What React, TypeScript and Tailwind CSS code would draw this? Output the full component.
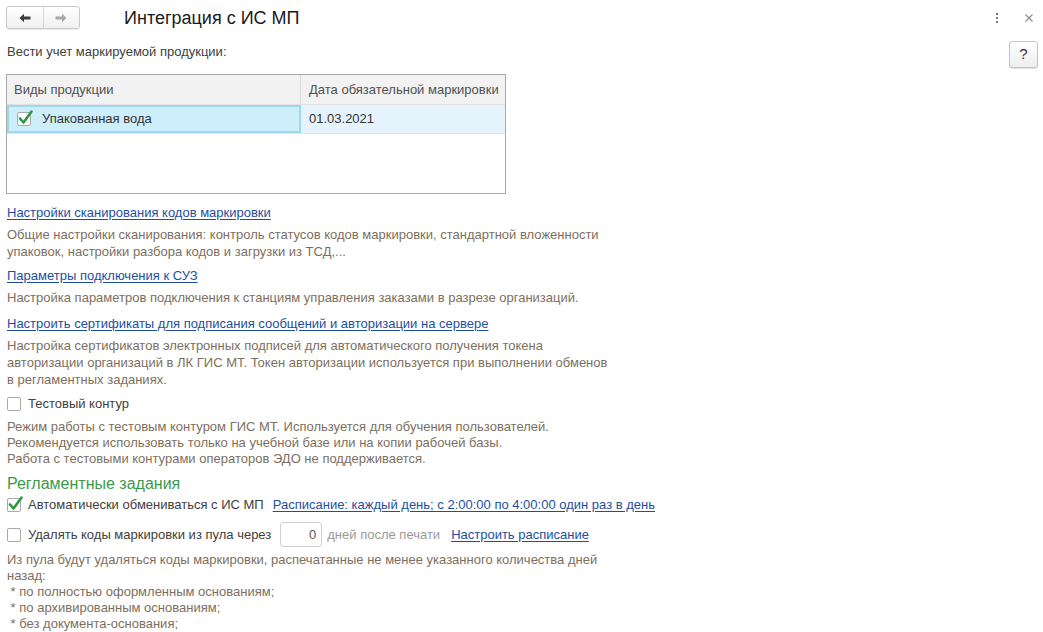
import React from "react";

const desc = "text-[13px] leading-[17px] text-[#7d6f60]";
const desc16 = "text-[13px] leading-[16px] text-[#7d6f60]";
const link = "text-[13px] leading-[17px] text-[#1d4f9f] underline underline-offset-2";

function CheckBox({ checked }: { checked?: boolean }) {
  return (
    <span className="relative inline-flex w-[14px] h-[14px] shrink-0 border border-[#a9a9a9] rounded-[2px] bg-white">
      {checked && (
        <svg className="absolute -left-[1px] -top-[4px]" width="17" height="17" viewBox="0 0 17 17">
          <path d="M3 9.5 L6.5 13.5 L14.5 2.5" fill="none" stroke="#2a9a45" strokeWidth="2.6" strokeLinecap="round" strokeLinejoin="round" />
        </svg>
      )}
    </span>
  );
}

export default function App() {
  return (
    <div className="w-[1043px] h-[632px] overflow-hidden bg-white text-[#404040] font-['Liberation_Sans',Arial,sans-serif] text-[13px] whitespace-nowrap">
      {/* header */}
      <div className="flex items-center h-[34px] pt-[1px]">
        <div className="ml-[6px] flex h-[23px] w-[74px] border border-[#c8c8c8] rounded-[3px] bg-gradient-to-b from-white to-[#f0f0f0] shadow-[0_1px_1px_rgba(0,0,0,0.08)]">
          <div className="flex-1 flex items-center justify-center border-r border-[#d6d6d6]">
            <svg width="12" height="10" viewBox="0 0 12 10">
              <path d="M0.5 5 L5 0.8 L5 3.6 L11.5 3.6 L11.5 6.4 L5 6.4 L5 9.2 Z" fill="#3c3c3c" />
            </svg>
          </div>
          <div className="flex-1 flex items-center justify-center">
            <svg width="12" height="10" viewBox="0 0 12 10">
              <path d="M11.5 5 L7 0.8 L7 3.6 L0.5 3.6 L0.5 6.4 L7 6.4 L7 9.2 Z" fill="#a8a8a8" />
            </svg>
          </div>
        </div>
        <div className="ml-[44px] text-[18px] text-[#1a1a1a] leading-none">Интеграция с ИС МП</div>
        <div className="ml-auto flex items-center">
          <div className="flex flex-col gap-[2px] mr-[27px]">
            <span className="w-[2px] h-[2px] bg-[#777]" />
            <span className="w-[2px] h-[2px] bg-[#777]" />
            <span className="w-[2px] h-[2px] bg-[#777]" />
          </div>
          <svg className="mr-[10px]" width="8" height="8" viewBox="0 0 8 8">
            <path d="M0.5 0.5 L7.5 7.5 M7.5 0.5 L0.5 7.5" stroke="#8a8a8a" strokeWidth="1.1" />
          </svg>
        </div>
      </div>

      {/* intro row */}
      <div className="flex items-center h-[34px]">
        <div className="ml-[7px] leading-[17px] text-[#404040]">Вести учет маркируемой продукции:</div>
        <div className="ml-auto mr-[5px] w-[29px] h-[27px] mt-[6px] flex items-center justify-center border border-[#c4c4c4] rounded-[3px] bg-gradient-to-b from-white to-[#eeeeee] shadow-[0_1px_1px_rgba(0,0,0,0.12)] text-[15px] text-[#333]">
          ?
        </div>
      </div>

      {/* table */}
      <div className="ml-[6px] mt-[6px] w-[500px] h-[120px] border border-[#a9a9a9]">
        <div className="flex h-[30px] bg-[#f2f2f2] border-b border-[#e0e0e0] text-[#505050]">
          <div className="w-[294px] flex items-center pl-[7px] border-r border-[#dcdcdc]">Виды продукции</div>
          <div className="flex-1 flex items-center pl-[8px]">Дата обязательной маркировки</div>
        </div>
        <div className="flex h-[29px] bg-[#e5f4fc] border-b border-[#d8e8f0] text-[#333]">
          <div className="w-[294px] flex items-center pl-[8px] gap-[11px] bg-[#cdeefb] border-2 border-[#9fd6f0]">
            <CheckBox checked />
            <span>Упакованная вода</span>
          </div>
          <div className="flex-1 flex items-center pl-[8px]">01.03.2021</div>
        </div>
      </div>

      {/* settings sections */}
      <div className="ml-[7px] mt-[10px] flex flex-col items-start">
        <div className={link}>Настройки сканирования кодов маркировки</div>
        <div className={`${desc} mt-[5px]`}>
          Общие настройки сканирования: контроль статусов кодов маркировки, стандартной вложенности
          <br />
          упаковок, настройки разбора кодов и загрузки из ТСД,...
        </div>

        <div className={`${link} mt-[7px]`}>Параметры подключения к СУЗ</div>
        <div className={`${desc} mt-[5px]`}>
          Настройка параметров подключения к станциям управления заказами в разрезе организаций.
        </div>

        <div className={`${link} mt-[9px]`}>Настроить сертификаты для подписания сообщений и авторизации на сервере</div>
        <div className={`${desc} mt-[5px]`}>
          Настройка сертификатов электронных подписей для автоматического получения токена
          <br />
          авторизации организаций в ЛК ГИС МТ. Токен авторизации используется при выполнении обменов
          <br />в регламентных заданиях.
        </div>

        <div className="flex items-center gap-[7px] mt-[7px] h-[17px] text-[#404040]">
          <CheckBox />
          <span>Тестовый контур</span>
        </div>
        <div className={`${desc16} mt-[7px]`}>
          Режим работы с тестовым контуром ГИС МТ. Используется для обучения пользователей.
          <br />
          Рекомендуется использовать только на учебной базе или на копии рабочей базы.
          <br />
          Работа с тестовыми контурами операторов ЭДО не поддерживается.
        </div>

        <div className="mt-[7px] text-[16px] leading-[19px] text-[#3a9a4c]">Регламентные задания</div>

        <div className="flex items-center mt-[3px] h-[17px] text-[#404040]">
          <CheckBox checked />
          <span className="ml-[7px]">Автоматически обмениваться с ИС МП</span>
          <span className={`${link} ml-[9px]`}>Расписание: каждый день; с 2:00:00 по 4:00:00 один раз в день</span>
        </div>

        <div className="flex items-center mt-[9px] h-[25px] text-[#404040]">
          <CheckBox />
          <span className="ml-[7px]">Удалять коды маркировки из пула через</span>
          <div className="ml-[9px] w-[42px] h-[25px] border border-[#cfcfcf] rounded-[3px] bg-white flex items-center justify-end pr-[5px] text-[#555]">
            0
          </div>
          <span className="ml-[5px] text-[#9a9a9a]">дней после печати</span>
          <span className={`${link} ml-[11px]`}>Настроить расписание</span>
        </div>

        <div className={`${desc16} mt-[5px]`}>
          Из пула будут удаляться коды маркировки, распечатанные не менее указанного количества дней
          <br />
          назад:
          <br />
          &nbsp;* по полностью оформленным основаниям;
          <br />
          &nbsp;* по архивированным основаниям;
          <br />
          &nbsp;* без документа-основания;
        </div>
      </div>
    </div>
  );
}
